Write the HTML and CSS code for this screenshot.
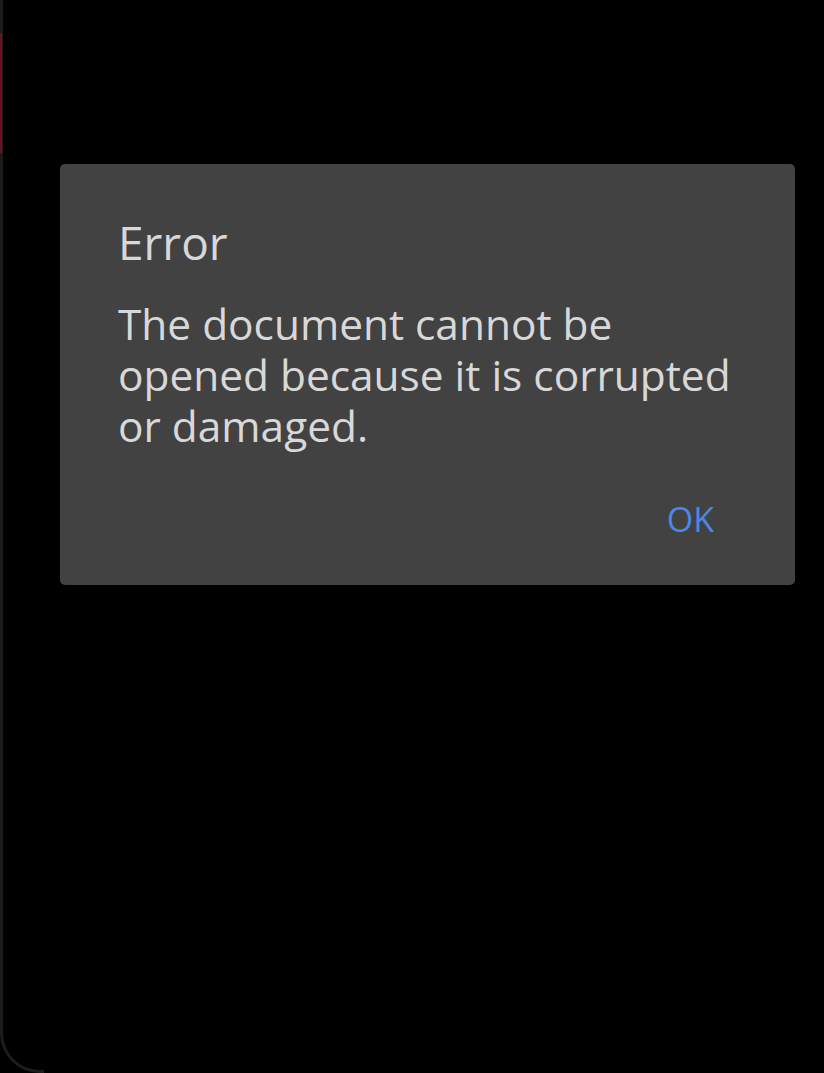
FILE: index.html
```html
<!DOCTYPE html>
<html lang="en">
<head>
    <meta charset="UTF-8">
    <meta name="viewport" content="width=device-width, initial-scale=1.0">
    <title>Error</title>
    <link rel="stylesheet" href="styles.css">
</head>
<body>

    <!-- phone edge on the left -->
    <div class="screen-edge">
        <div class="edge-mark"></div>
    </div>

    <div class="dialog">
        <h2 class="dialog-title">Error</h2>
        <p class="dialog-message">The document cannot be opened because it is corrupted or damaged.</p>
        <div class="dialog-actions">
            <button class="dialog-btn">OK</button>
        </div>
    </div>

</body>
</html>
```

FILE: styles.css
```css
body {
    margin: 0;
    background-color: #000;
    font-family: "Open Sans", "Noto Sans", sans-serif;
    height: 1073px;
    overflow: hidden;
    padding-top: 164px;
    box-sizing: border-box;
}

/* --- left edge of the phone frame --- */
.screen-edge {
    position: absolute;
    top: 0;
    left: 0;
    width: 44px;
    height: 1073px;
    border-left: 3px solid #1c1c1c;
    border-bottom: 3px solid #1c1c1c;
    border-bottom-left-radius: 40px;
    box-sizing: border-box;
}

.edge-mark {
    position: absolute;
    top: 33px;
    left: -3px;
    width: 2px;
    height: 120px;
    background-color: #6b1420;
}

/* --- Dialog --- */
.dialog {
    margin-left: 60px;
    width: 735px;
    height: 421px;
    box-sizing: border-box;
    background-color: #424242;
    border-radius: 5px;
    padding: 50px 58px 0 58px;
    color: #d8d8d8;
}

.dialog-title {
    margin: 0;
    font-size: 46px;
    font-weight: 400;
    line-height: 56px;
}

.dialog-message {
    margin: 28px 0 0 0;
    font-size: 42.4px;
    line-height: 51px;
}

.dialog-actions {
    display: flex;
    justify-content: flex-end;
    margin-top: 45px;
}

.dialog-btn {
    background: none;
    border: none;
    padding: 0 23px 0 0;
    color: #4d87e3;
    font-family: inherit;
    font-size: 34px;
    line-height: 46px;
    cursor: pointer;
}
```
